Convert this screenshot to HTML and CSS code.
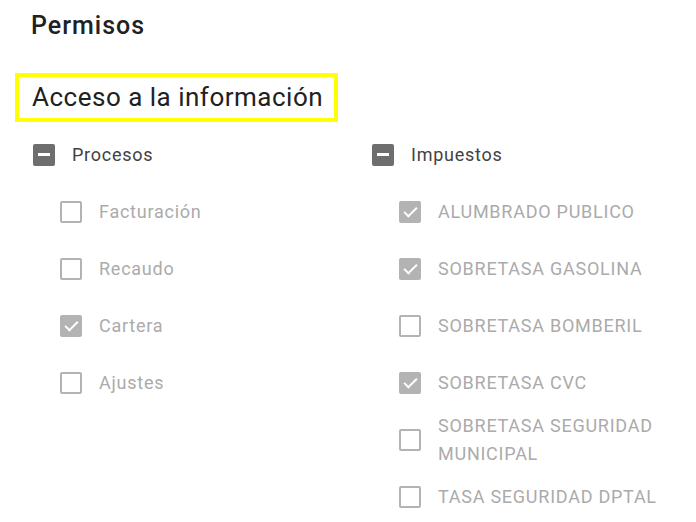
FILE: index.html
```html
<!DOCTYPE html>
<html lang="es">
<head>
  <meta charset="UTF-8" />
  <meta name="viewport" content="width=device-width, initial-scale=1" />
  <title>Permisos</title>
  <link rel="stylesheet" href="styles.css">
</head>
<body>
  <div class="permisos">
    <h2 class="titulo">Permisos</h2>

    <div class="seccion">
      <h3>Acceso a la información</h3>
    </div>

    <div class="columnas">
      <div class="grupo">
        <div class="fila padre">
          <span class="caja indeterminado"></span>
          <span class="texto">Procesos</span>
        </div>
        <div class="fila hijo">
          <span class="caja"></span>
          <span class="texto">Facturación</span>
        </div>
        <div class="fila hijo">
          <span class="caja"></span>
          <span class="texto">Recaudo</span>
        </div>
        <div class="fila hijo">
          <span class="caja marcado"></span>
          <span class="texto">Cartera</span>
        </div>
        <div class="fila hijo">
          <span class="caja"></span>
          <span class="texto">Ajustes</span>
        </div>
      </div>

      <div class="grupo">
        <div class="fila padre">
          <span class="caja indeterminado"></span>
          <span class="texto">Impuestos</span>
        </div>
        <div class="fila hijo">
          <span class="caja marcado"></span>
          <span class="texto">ALUMBRADO PUBLICO</span>
        </div>
        <div class="fila hijo">
          <span class="caja marcado"></span>
          <span class="texto">SOBRETASA GASOLINA</span>
        </div>
        <div class="fila hijo">
          <span class="caja"></span>
          <span class="texto">SOBRETASA BOMBERIL</span>
        </div>
        <div class="fila hijo">
          <span class="caja marcado"></span>
          <span class="texto">SOBRETASA CVC</span>
        </div>
        <div class="fila hijo">
          <span class="caja"></span>
          <span class="texto">SOBRETASA SEGURIDAD MUNICIPAL</span>
        </div>
        <div class="fila hijo">
          <span class="caja"></span>
          <span class="texto">TASA SEGURIDAD DPTAL</span>
        </div>
      </div>
    </div>
  </div>
</body>
</html>
```

FILE: styles.css
```css
body {
  margin: 0;
  padding: 0;
  font-family: Roboto, "Liberation Sans", Arial, sans-serif;
  background-color: #fff;
  color: #212121;
}

.permisos {
  padding: 10px 15px 0 15px;
}

.titulo {
  margin: 0 0 0 16px;
  font-size: 25px;
  font-weight: 500;
  letter-spacing: 1px;
  line-height: 32px;
  color: #212121;
}

.seccion {
  display: inline-block;
  margin-top: 31px;
  border: 4px solid #ffff00;
  padding: 3px 11px 3px 13px;
}

.seccion h3 {
  margin: 0;
  font-size: 26px;
  font-weight: 400;
  letter-spacing: 0.5px;
  line-height: 35px;
  color: #212121;
}

.columnas {
  display: grid;
  grid-template-columns: 339px 1fr;
  margin-top: 4px;
  padding-left: 18px;
}

.fila {
  display: flex;
  align-items: center;
  height: 57px;
  font-size: 18px;
  letter-spacing: 0.75px;
  line-height: 28px;
}

.fila .texto {
  padding-top: 1px;
}

.hijo {
  padding-left: 27px;
}

.padre .texto {
  color: #424242;
}

.hijo .texto {
  color: #ababab;
}

.caja {
  flex: none;
  width: 18px;
  height: 18px;
  border: 2.5px solid #b3b3b3;
  border-radius: 2px;
  margin-right: 17px;
  position: relative;
}

.caja.indeterminado {
  background-color: #6e6e6e;
  border-color: #6e6e6e;
}

.caja.indeterminado::after {
  content: "";
  position: absolute;
  left: 3px;
  right: 3px;
  top: 7.5px;
  height: 3px;
  background-color: #fff;
}

.caja.marcado {
  background-color: #b3b3b3;
}

.caja.marcado::after {
  content: "";
  position: absolute;
  left: 5.5px;
  top: 1px;
  width: 5px;
  height: 11px;
  border: solid #fff;
  border-width: 0 2px 2px 0;
  transform: rotate(45deg);
}
```
